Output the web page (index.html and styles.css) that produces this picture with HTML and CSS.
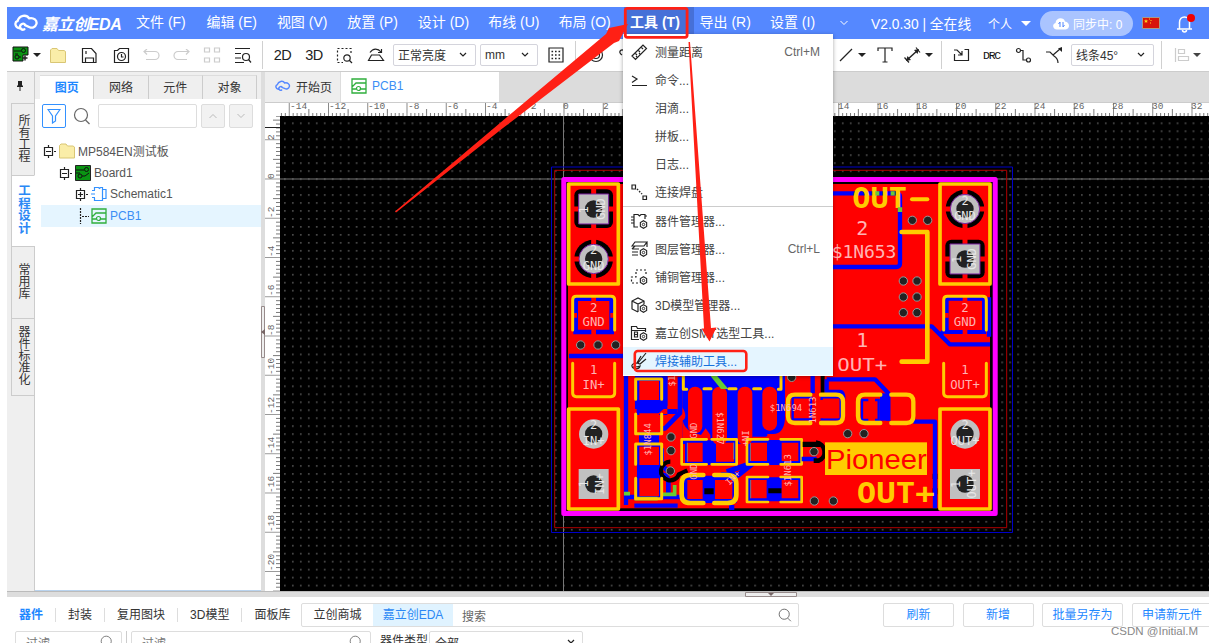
FILE: index.html
```html
<!DOCTYPE html>
<html lang="zh-CN">
<head>
<meta charset="utf-8">
<title>嘉立创EDA</title>
<link rel="stylesheet" href="styles.css">
</head>
<body>
<svg class="defs" width="0" height="0">
  <defs>
    <symbol id="cloud" viewBox="0 0 24 17"><path d="M5 13.5C1 12.500 0 8 3.500 6.500C5 1 12 0 14.500 4C19 3 22.500 6 21.500 9.500C20.500 13 17 13.500 15 12.500L10.500 10.500M10 14.500a2.800 2.800 0 1 1 1-4" fill="none" stroke="currentColor" stroke-width="2.200" stroke-linecap="round"/></symbol>
    <symbol id="search" viewBox="0 0 18 18"><circle cx="8" cy="8" r="6.500" fill="none" stroke="currentColor" stroke-width="1.200"/><path d="M12.500 13l4 4" stroke="currentColor" stroke-width="1.200"/></symbol>
    <symbol id="pcb" viewBox="0 0 16 16"><path d="M1 9V1h14v14H1V9l4-4h10M1 11h4M10 11h5" fill="none" stroke="#2fae3c" stroke-width="1.300"/><circle cx="7.500" cy="10.500" r="2" fill="none" stroke="#2fae3c" stroke-width="1.200"/></symbol>
    <symbol id="folder" viewBox="0 0 16 16"><path d="M.5 15V2.500L2 1h5l1.500 2H14l1.500 1V15z" fill="#faeda8" stroke="#d9c675"/></symbol>
    <symbol id="board" viewBox="0 0 16 16"><path d="M.5.5h15v15H.5z" fill="#0a9413" stroke="#222"/><path d="M1 5h8M7 11h3l4-3M1 8h4" stroke="#111" fill="none"/><circle cx="11.500" cy="4.500" r="2" fill="none" stroke="#111"/><circle cx="5" cy="11" r="2" fill="none" stroke="#111"/></symbol>
    <symbol id="gear" viewBox="0 0 8 8"><path d="M4 .6l2.800 1.700v3.400L4 7.400 1.200 5.700V2.300z" fill="#fff" stroke="#222"/><circle cx="4" cy="4" r="1.100" fill="none" stroke="#222" stroke-width=".8"/></symbol>
  </defs>
</svg>
<div class="app">
  <header class="topbar">
    <div class="logo"><svg width="25" height="18"><use href="#cloud"/></svg><span>嘉立创EDA</span></div>
    <nav class="menubar">
      <span>文件 (F)</span><span>编辑 (E)</span><span>视图 (V)</span><span>放置 (P)</span><span>设计 (D)</span><span>布线 (U)</span><span>布局 (O)</span><span class="open">工具 (T)</span><span>导出 (R)</span><span>设置 (I)</span>
    </nav>
    <svg class="more" width="10" height="6" viewBox="0 0 10 6"><path d="M1.500 1L5 4.500 8.500 1" fill="none" stroke="#fff"/></svg>
    <span class="version">V2.0.30 | 全在线</span>
    <span class="scope">个人 <i class="caret light"></i></span>
    <div class="sync"><svg width="18" height="13" viewBox="0 0 18 13"><path d="M5 12.500C1 12.500-.5 7.500 3.500 6 4 0 12 0 13 4.500c5 .5 5.500 7.500.500 8z" fill="#fff"/><path d="M8 5v5M8 5L6.500 7M11 5v5M11 10l1.500-2" stroke="#5588ff" fill="none"/></svg><span>同步中: 0</span></div>
    <svg class="flag" width="18" height="12" viewBox="0 0 18 12"><path d="M.5.5h17v11H.5z" fill="#d8130b" stroke="#a98"/><path d="M4 2l.6 1.500H6L5 4.500l.3 1.500L4 5 2.700 6 3 4.500l-1-1h1.400z" fill="#ffd21a"/><path d="M7 2h1M8.500 3.500h1M8 6h1" stroke="#ffd21a"/></svg>
    <svg class="bell" width="22" height="20" viewBox="0 0 22 20"><path d="M2 16h15M4.500 16V9.500C4.500 2 14.500 2 14.500 9.500V16M7.500 17c0 2.500 4 2.500 4 0" fill="none" stroke="#fff" stroke-width="1.500"/><circle cx="16" cy="5" r="4" fill="#f00000"/></svg>
  </header>

  <div class="toolbar">
    <span><svg width="30" height="18" viewBox="0 0 30 18"><path d="M1 1h15v8h-5v6H1z" fill="#0a9413" stroke="#111"/><path d="M2 5h7M3 8h3M7 11h2" stroke="#111" fill="none"/><circle cx="11.500" cy="4.500" r="2" fill="none" stroke="#111"/><circle cx="5" cy="11" r="2" fill="none" stroke="#111"/><path d="M10.500 12h5M13 9.500v5" stroke="#222" stroke-width="1.500"/><path d="M21 7h8l-4 4z" fill="#222"/></svg></span>
    <span><svg width="16" height="17"><use href="#folder"/></svg></span>
    <span><svg width="17" height="17" viewBox="0 0 17 17"><path d="M1.500 1.500h9l4.500 5V15.500H1.500zM4.500 15v-4h8v4M5 4v3" class="ln"/></svg></span>
    <span><svg width="17" height="17" viewBox="0 0 17 17"><path d="M1.500 3.500h3l2-2h9v14h-14z" class="ln"/><circle cx="8.500" cy="9.500" r="4" class="ln"/><path d="M8.500 7v3h2" class="ln"/></svg></span>
    <span><svg width="18" height="12" viewBox="0 0 18 12"><path d="M5 0L2 2.500l3 3M2 2.500h11a3.500 3.500 0 0 1 0 8H4" class="dis"/></svg></span>
    <span><svg width="18" height="12" viewBox="0 0 18 12"><path d="M13 0l3 2.500-3 3M16 2.500H5a3.500 3.500 0 0 0 0 8h9" class="dis"/></svg></span>
    <span><svg width="18" height="18" viewBox="0 0 18 18"><path d="M1.500 2h5v4h-5zM11.500 2h5v4h-5zM1.500 12h5v4h-5zM11.500 12h5v4h-5z" class="dis"/></svg></span>
    <span><svg width="18" height="17" viewBox="0 0 18 17"><path d="M1 1.500h15M1 6.500h6M1 11h6M1 15.500h9" class="ln"/><circle cx="12" cy="10" r="3.500" class="ln"/><path d="M14.500 12.500l2.500 3" class="ln"/></svg></span>
    <b></b>
    <span class="dim">2D</span>
    <span class="dim">3D</span>
    <span><svg width="17" height="17" viewBox="0 0 17 17"><path d="M15 6V1.500H1.500v14H7" class="ln" stroke-dasharray="2 2"/><circle cx="11" cy="11" r="3.200" class="ln"/><path d="M13 13l3 3" class="ln"/></svg></span>
    <span><svg width="18" height="14" viewBox="0 0 18 14"><path d="M4.500 7h8l4 5.500H1.500zM3 4.500C6 0 11 0 14 4M14.500 1v3.500H11" class="ln"/></svg></span>
    <span><em class="select w83">正常亮度<svg width="8" height="6" viewBox="0 0 8 6"><path d="M1 1l3 3 3-3" class="ln"/></svg></em></span>
    <span><em class="select w58">mm<svg width="8" height="6" viewBox="0 0 8 6"><path d="M1 1l3 3 3-3" class="ln"/></svg></em></span>
    <span><svg width="16" height="16" viewBox="0 0 16 16"><path d="M1 1h14v14H1z" class="ln"/><path d="M3.500 4.500h10M3.500 8h10M3.500 11.500h10" stroke="#222" stroke-width="1.600" stroke-dasharray="1.600 1.900"/></svg></span>
    <b></b>
    <span><svg width="16" height="16" viewBox="0 0 16 16"><circle cx="8" cy="8" r="6.500" class="ln"/><circle cx="8" cy="8" r="3.500" class="ln"/></svg></span>
    <span><svg width="16" height="16" viewBox="0 0 16 16"><path d="M3 8c-5-3 0-7 2-4l8 8" class="ln" fill="none"/></svg></span>
    <span></span>
    <span><svg width="32" height="16" viewBox="0 0 32 16"><path d="M3 14L15 2" class="ln"/><path d="M21 6h8l-4 4z" fill="#222"/></svg></span>
    <span><svg width="16" height="16" viewBox="0 0 16 16"><path d="M1 4V1h14v3M8 1v14M5.500 15h5" class="ln"/></svg></span>
    <span><svg width="30" height="16" viewBox="0 0 30 16"><path d="M3 13L14 3" stroke="#222" stroke-width="1.500"/><path d="M0.500 10.500l4.500 5M12 .5l4 5" class="ln"/><path d="M2 14l1.500-5 3.500 4zM15 2l-1.500 5L10 3z" fill="#222"/><path d="M21 6h8l-4 4z" fill="#222"/></svg></span>
    <b></b>
    <span><svg width="17" height="14" viewBox="0 0 17 14"><path d="M1.500 6v6.500h14V1.500h-4M1 2h3l5 5M9 3v4H5" class="ln"/></svg></span>
    <span class="drc">DRC</span>
    <span><svg width="17" height="16" viewBox="0 0 17 16"><circle cx="3.500" cy="3.500" r="2" class="ln"/><circle cx="13.500" cy="13" r="2" class="ln"/><path d="M5.500 3.500H8V13h3.500" class="ln"/></svg></span>
    <span><svg width="17" height="17" viewBox="0 0 17 17"><path d="M0 5h4l4 4c3 2 4 4 4 7M7 8l7-6" class="ln"/><path d="M16 0v5l-4-3.500z" fill="#222"/></svg></span>
    <span><em class="select w83">线条45°<svg width="8" height="6" viewBox="0 0 8 6"><path d="M1 1l3 3 3-3" class="ln"/></svg></em></span>
    <b></b>
    <span><svg width="28" height="16" viewBox="0 0 28 16"><path d="M1.500 1v14M4.500 2.500h6v4h-6zM4.500 9.500h10v4h-10z" class="dis"/><path d="M19 6h8l-4 4z" fill="#444"/></svg></span>
  </div>

  <div class="work">
    <aside class="rail">
      <div class="pin"><svg width="8" height="10" viewBox="0 0 8 10"><path d="M2 0h4v4.500h1V6H1V4.500h1z" fill="#222"/><path d="M4 6v4" stroke="#222"/></svg></div>
      <div class="vtab">所有工程</div>
      <div class="vtab on">工程设计</div>
      <div class="vtab">常用库</div>
      <div class="vtab tall">器件标准化</div>
    </aside>
    <section class="panel">
      <div class="ptabs"><span class="on">图页</span><span>网络</span><span>元件</span><span>对象</span></div>
      <div class="pbody">
        <div class="find">
          <span class="filter"><svg width="14" height="16" viewBox="0 0 14 16"><path d="M1 1.500h12L8.500 8v5l-3 2V8z" fill="none" stroke="#3391ff" stroke-width="1.200"/></svg></span>
          <svg class="mag" width="18" height="18"><use href="#search"/></svg>
          <span class="input"></span>
          <span class="btn"><svg width="10" height="6" viewBox="0 0 10 6"><path d="M1.500 5L5 1.500 8.500 5" fill="none" stroke="#bbb"/></svg></span>
          <span class="btn"><svg width="10" height="6" viewBox="0 0 10 6"><path d="M1.500 1L5 4.500 8.500 1" fill="none" stroke="#bbb"/></svg></span>
        </div>
        <div class="tree">
          <div class="row"><svg width="14" height="16" viewBox="0 0 14 16"><path d="M1.500 4.500h8v8h-8zM3 8.500h5M5.500 2v2M5.500 13v2M11 8.500h2" class="ln"/></svg><svg width="16" height="16"><use href="#folder"/></svg>MP584EN测试板</div>
          <div class="row l1"><svg width="14" height="16" viewBox="0 0 14 16"><path d="M1.500 4.500h8v8h-8zM3 8.500h5M5.500 2v2M5.500 13v2M11 8.500h2" class="ln"/></svg><svg width="16" height="16"><use href="#board"/></svg>Board1</div>
          <div class="row l2"><svg width="14" height="16" viewBox="0 0 14 16"><path d="M1.500 4.500h8v8h-8zM3 8.500h5M5.500 6v5M5.500 2v2M5.500 13v2M11 8.500h2" class="ln"/></svg><svg width="16" height="16" viewBox="0 0 16 16"><path d="M3.500 4V1.500h4l1 1 1-1h2V14.500H3.500V12M1 4.500h3M1 11.500h3M0 8h4M11.500 3.500h3.500v9h-3.500" fill="none" stroke="#3391ff" stroke-width="1.200"/></svg>Schematic1</div>
          <div class="row l2 sel"><svg width="14" height="16" viewBox="0 0 14 16"><path d="M5.500 0v16M7 8.500h7" class="ln" stroke-dasharray="2 1"/></svg><svg width="16" height="16"><use href="#pcb"/></svg>PCB1</div>
        </div>
      </div>
    </section>
    <div class="vsplit"><svg width="4" height="52" viewBox="0 0 4 52"><path d="M.5.5h3v51h-3z" fill="#eee" stroke="#978b8b"/><path d="M4 23v6l-4-3z" fill="#766"/></svg></div>
    <main class="editor">
      <div class="etabs"><span class="home"><svg width="16" height="12"><use href="#cloud"/></svg>开始页</span><span class="doc"><svg width="16" height="16"><use href="#pcb"/></svg>PCB1</span></div>
      <svg class="stage" width="944" height="489" viewBox="265 102 944 489">
        <defs>
          <pattern id="dots" x="284" y="122.400" width="7.970" height="7.970" patternUnits="userSpaceOnUse"><rect width="1.700" height="1.700" fill="#4a4a4a"/></pattern>
          <pattern id="tx" x="563.500" y="102" width="39.250" height="14" patternUnits="userSpaceOnUse"><path d="M.5 0v14" stroke="#888"/><path d="M20.100 7v7" stroke="#777"/><path d="M4.400 11v3M8.400 11v3M12.300 11v3M16.200 11v3M24 11v3M28 11v3M31.900 11v3M35.800 11v3" stroke="#777"/></pattern>
          <pattern id="ty" x="265" y="178.500" width="15" height="39.250" patternUnits="userSpaceOnUse"><path d="M0 .5h15" stroke="#999"/><path d="M8 20.100h7M11 4.400h4M11 8.400h4M11 12.300h4M11 16.200h4M11 24h4M11 28h4M11 31.900h4M11 35.800h4" stroke="#777"/></pattern>
          <g id="via"><circle r="12.500" fill="#222" stroke="#999" stroke-width="3"/></g>
          <g id="roundpad"><circle r="44" fill="#c0c0c0"/><circle r="26" fill="#222"/></g>
          <g id="squarepad"><path d="M-45-45h90v90h-90z" fill="#c0c0c0"/><circle r="26" fill="#222"/></g>
        </defs>
        <rect x="265" y="102" width="944" height="489" fill="#fff"/>
        <rect x="280" y="102" width="929" height="14" fill="url(#tx)"/>
        <rect x="265" y="116" width="15" height="475" fill="url(#ty)"/>
        <path d="M265 127.500h15" stroke="#222"/>
        <g class="rul">
          <text x="290" y="109">-14</text><text x="329" y="109">-12</text><text x="368" y="109">-10</text><text x="408" y="109">-8</text><text x="447" y="109">-6</text><text x="486" y="109">-4</text><text x="525" y="109">-2</text><text x="563" y="109">0</text><text x="603" y="109">2</text><text x="838" y="109">14</text><text x="877" y="109">16</text><text x="916" y="109">18</text><text x="955" y="109">20</text><text x="995" y="109">22</text><text x="1034" y="109">24</text><text x="1073" y="109">26</text><text x="1112" y="109">28</text><text x="1152" y="109">30</text><text x="1191" y="109">32</text>
          <text transform="translate(274 140) rotate(-90)">2</text><text transform="translate(274 179) rotate(-90)">0</text><text transform="translate(274 218) rotate(-90)">-2</text><text transform="translate(274 257) rotate(-90)">-4</text><text transform="translate(274 296) rotate(-90)">-6</text><text transform="translate(274 336) rotate(-90)">-8</text><text transform="translate(274 375) rotate(-90)">-10</text><text transform="translate(274 414) rotate(-90)">-12</text><text transform="translate(274 454) rotate(-90)">-14</text><text transform="translate(274 493) rotate(-90)">-16</text><text transform="translate(274 532) rotate(-90)">-18</text><text transform="translate(274 571) rotate(-90)">-20</text>
        </g>
        <rect x="280" y="116" width="929" height="475"/>
        <rect x="280" y="116" width="929" height="475" fill="url(#dots)"/>
        <path d="M280 179h929M563.500 116v475" stroke="#777"/>
        <path d="M551.500 167h461v365.500h-461z" fill="none" stroke="#0000c8"/>
        <path d="M554.700 170.300h452v357.400h-452z" fill="none" stroke="#b00000"/>
        <rect x="563.800" y="179.500" width="431.400" height="334" stroke="#f0f" stroke-width="5" stroke-linejoin="round"/>
        <rect x="568" y="184" width="422" height="324.300" fill="#f00"/>

        <!-- upper left pads -->
        <g transform="translate(545 160) scale(.33333)">
          <rect x="88" y="88" width="116" height="116" rx="18"/><path d="M146 86v120M86 147h120" stroke="#f00" stroke-width="15"/>
          <use href="#squarepad" x="146" y="147"/><path d="M101 102h90v90h-90z" fill="none" stroke="#7a20a0" stroke-width="3"/>
          <circle cx="146" cy="297" r="58"/><path d="M146 237v120M86 297h120" stroke="#f00" stroke-width="15"/>
          <use href="#roundpad" x="146" y="297"/><circle cx="146" cy="297" r="44" fill="none" stroke="#7a20a0" stroke-width="3"/>
          <path d="M71 72h149v300H71z" class="ylw" stroke-width="11"/>
          <path d="M92 416h108v100H92z" fill="none" stroke="#00f" stroke-width="14"/><path d="M146 405v18M146 508v20M196 466h16M80 466h16" stroke="#f00" stroke-width="14"/>
          <path d="M83 510v-90q0-11 11-11h104q11 0 11 11v90" class="ylw" stroke-width="9"/>
          <use href="#via" x="107" y="555"/><use href="#via" x="159" y="555"/><use href="#via" x="212" y="555"/>
          <g class="net" font-size="37"><text x="146" y="455">2</text><text x="146" y="498">GND</text></g>
          <g class="pad" font-size="36"><text x="146" y="283">2</text><text x="146" y="331">GND</text><text transform="translate(128 150) rotate(-90)">1</text><text transform="translate(180 147) rotate(-90)">GND</text></g>
        </g>

        <!-- upper right area -->
        <g transform="translate(780 160) scale(.33333)">
          <path d="M155 100h194q11 0 11 11v199q0 11-11 11H155M155 499h300l54 54h121M480 525l22-22M627 412v118" class="blu" stroke-width="13"/>
          <text x="217" y="145" class="silk" textLength="164" lengthAdjust="spacingAndGlyphs">OUT</text><path d="M396 118h46" class="ylw" stroke-width="12"/>
          <path d="M286 100h12M332 100h12M360 142v14" stroke="#6c3" stroke-width="13"/>
          <path d="M365 216h77v389h-77" class="ylw" stroke-width="14"/>
          <use href="#via" x="397" y="181"/><use href="#via" x="443" y="181"/><use href="#via" x="370" y="363"/><use href="#via" x="411" y="363"/><use href="#via" x="370" y="411"/><use href="#via" x="411" y="411"/><use href="#via" x="370" y="458"/><use href="#via" x="411" y="458"/>
          <circle cx="555" cy="147" r="58"/><path d="M555 87v120M495 147h120" stroke="#f00" stroke-width="15"/>
          <use href="#roundpad" x="555" y="147"/><circle cx="555" cy="147" r="44" fill="none" stroke="#7a20a0" stroke-width="3"/>
          <rect x="496" y="239" width="118" height="116" rx="18"/><path d="M555 237v120M494 297h122" stroke="#f00" stroke-width="15"/>
          <use href="#squarepad" x="555" y="297"/><path d="M510 252h90v90h-90z" fill="none" stroke="#7a20a0" stroke-width="3"/>
          <path d="M480 72h150v300H480z" class="ylw" stroke-width="11"/>
          <path d="M500 416h112v100H500z" fill="none" stroke="#00f" stroke-width="12"/><path d="M555 405v18M555 508v20M490 466h16" stroke="#f00" stroke-width="14"/>
          <path d="M491 510v-90q0-11 11-11h106q11 0 11 11v90" class="ylw" stroke-width="9"/>
          <g class="net" font-size="54"><text x="247" y="225" font-size="60">2</text><text x="252" y="293" textLength="194">$1N653</text><text x="247" y="562" font-size="60">1</text><text x="247" y="632" textLength="150" lengthAdjust="spacingAndGlyphs">OUT+</text></g>
          <g class="net" font-size="37"><text x="555" y="455">2</text><text x="555" y="498">GND</text></g>
          <g class="pad" font-size="36"><text x="555" y="135">2</text><text x="555" y="181">GND</text><text transform="translate(542 298) rotate(-90)">1</text><text transform="translate(588 297) rotate(-90)">GND</text></g>
        </g>

        <!-- lower left area -->
        <g transform="translate(545 345) scale(.33333)">
          <path d="M72 33h165M243 80v400M243 456h245M268 482h130" class="blu" stroke-width="13"/>
          <path d="M270 92h98v90l-30 25h60v-15h-128zM275 165h92v45h-92zM282 262h60v35h-60zM276 300h74v160h-74z" fill="#00f"/>
          <path d="M345 250h15l45-46V95M350 310v50l20 20M350 390q15-2 20 15v50" class="blu" stroke-width="14"/>
          <path d="M412 92h308v130q-4 45-35 45h-18v30h-255v-70q18-10 0-40z" fill="#00f"/>
          <path d="M420 285h155v75H420zM608 285h160v75H608zM415 392h160v82H415zM608 397h160v72H608z" fill="#00f"/>
          <path d="M545 380l60-20M520 390h60l50-40M560 480v15" class="blu" stroke-width="16"/>
          <path d="M478 430h28v18h-28zM670 430h40v15h-40z"/>
          <path d="M283 108h59v57h-59zM283 205h59v52h-59zM283 305h59v55h-59zM283 400h59v54h-59zM427 293h46v57h-46zM513 293h54v57h-54zM616 293h50v55h-50zM710 293h50v55h-50zM427 405h46v57h-46zM510 405h52v57h-52zM617 405h48v55h-48zM710 405h50v55h-50z" fill="#f00"/>
          <path d="M427 350v-57M566 293v50M616 348v-55M617 460v-55" stroke="#778" stroke-width="3"/>
          <g fill="#f00"><rect x="429" y="125" width="43" height="140" rx="21"/><rect x="502" y="125" width="44" height="175" rx="21"/><rect x="578" y="125" width="44" height="175" rx="21"/><rect x="652" y="125" width="44" height="132" rx="21"/><path d="M412 222q5 30 30 40l26 8 14-20 14 20v16h-84zM622 275h40l20-8h40v16H622zM475 365h70l-22 22h-38zM652 365h74l-18 22h-38z"/></g>
          <path d="M376 350a28 28 0 1 0 26 38l25-12" fill="none" stroke="#000" stroke-width="13"/>
          <path d="M237 446h18M353 448h36v-28M268 461h70" fill="none" stroke="#6c3" stroke-width="11"/><path d="M494 90h20l36 42h-22z" fill="#6c3"/>
          <path d="M272 163v-61h78v61M272 207v59h78v-59M272 358v-61h78v61M272 400v61h78v-61M415 92v41h10M708 92v41h-8M477 131h21M552 131h21M626 131h21" class="ylw" stroke-width="9"/>
          <path d="M485 283h-75v75h75M500 283h75v75h-75M669 283h-63v75h63M707 283h63v75h-63M669 396h-63v75h63M707 396h63v75h-63" class="ylw" stroke-width="8"/>
          <path d="M475 390h-39q-26 0-26 26v34q0 24 26 24h39M508 390h39q27 0 27 26v34q0 24-27 24h-39" class="ylw" stroke-width="14"/>
          <use href="#via" x="378" y="276"/><use href="#via" x="378" y="317"/><use href="#via" x="376" y="378"/>
          <path d="M83 55v90q0 10 11 10h104q11 0 11-10V55" class="ylw" stroke-width="9"/>
          <path d="M71 192h149v300H71z" class="ylw" stroke-width="11"/>
          <use href="#roundpad" x="146" y="267"/><use href="#squarepad" x="146" y="417"/>
          <g class="net" font-size="37"><text x="146" y="88">1</text><text x="146" y="131">IN+</text></g>
          <g class="pad" font-size="36"><text x="146" y="253">2</text><text x="146" y="299">IN+</text><text transform="translate(130 417) rotate(-90)">1</text><text transform="translate(178 417) rotate(-90)">IN+</text></g>
          <g class="net" font-size="27"><text transform="translate(318 283) rotate(-90)">$1N844</text><text transform="translate(391 92) rotate(-90)">$1N8</text><text transform="translate(456 257) rotate(-90)">GND</text><text transform="translate(456 380) rotate(-90)">GND</text><text transform="translate(516 250) rotate(90)">$1N627</text><text transform="translate(592 280) rotate(90)">IN+</text><text transform="translate(570 405) rotate(-45)">IN+</text></g>
        </g>

        <!-- lower right area -->
        <g transform="translate(780 345) scale(.33333)">
          <path d="M122 90h12v55h-12zM68 290h52v16H68zM458 386h14v16h-14zM458 430h14v18h-14z"/>
          <path d="M98 92v53M140 103h145l40 42v82M140 103v38h40q10 0 10 20M400 230h65v260M5 140v95M65 342h45" class="blu" stroke-width="13"/>
          <path d="M314 145v82" class="blu" stroke-width="28"/>
          <path d="M38 157h55v66H38zM125 157h57v66h-57zM246 165h50v60h-50z" fill="none" stroke="#00f" stroke-width="7"/>
          <path d="M265 150h20v80h-20zM106 150h12v80h-12zM118 165h56v55h-56z" fill="#f00"/>
          <path d="M92 293a28 28 0 0 1 8 54H85" transform="translate(16 0)" fill="none" stroke="#000" stroke-width="14"/>
          <path d="M91 149H45q-21 0-21 21v43q0 21 21 21h46M123 149h45q21 0 21 21v43q0 21-21 21h-45M301 149h-46q-21 0-21 21v43q0 21 21 21h46M334 149h45q21 0 21 21v43q0 21-21 21h-45" class="ylw" stroke-width="13"/>
          <use href="#via" x="35" y="97"/><use href="#via" x="203" y="266"/><use href="#via" x="252" y="266"/><use href="#via" x="102" y="320"/><use href="#via" x="103" y="468"/><use href="#via" x="160" y="468"/>
          <rect x="135" y="292" width="306" height="98" fill="#fc0"/><text x="138" y="371" class="brand" textLength="302" lengthAdjust="spacingAndGlyphs">Pioneer</text>
          <text x="230" y="474" class="silk" textLength="234" lengthAdjust="spacingAndGlyphs">OUT+</text>
          <path d="M491 55v90q0 10 11 10h106q11 0 11-10V55" class="ylw" stroke-width="9"/>
          <path d="M480 192h150v300H480z" class="ylw" stroke-width="11"/>
          <use href="#roundpad" x="555" y="267"/><use href="#squarepad" x="555" y="417"/>
          <g class="net" font-size="37"><text x="555" y="88">1</text><text x="555" y="131">OUT+</text></g>
          <g class="pad" font-size="36"><text x="555" y="253">2</text><text x="555" y="299">OUT+</text><text transform="translate(541 418) rotate(-90)">1</text><text transform="translate(587 417) rotate(-90)">OUT+</text></g>
          <g class="net" font-size="27"><text x="18" y="199">$1N694</text><text transform="translate(33 376) rotate(-90)">$1N613</text><text transform="translate(108 195) rotate(-90)">1N613</text></g>
        </g>
        <path d="M265 102.500h944" stroke="#ccc"/>
      </svg>
    </main>
  </div>
  <div class="hsplit"><svg width="52" height="5" viewBox="0 0 52 5"><path d="M.5.5h51v4H.5z" fill="#eee" stroke="#978b8b"/><path d="M23 1h6l-3 3z" fill="#766"/></svg></div>

  <footer class="library">
    <div class="bar">
      <div class="kinds"><span class="on">器件</span><span>封装</span><span>复用图块</span><span>3D模型</span><span>面板库</span></div>
      <div class="query"><span class="src">立创商城</span><span class="src on">嘉立创EDA</span><span class="ph">搜索</span><svg width="14" height="14"><use href="#search"/></svg></div>
      <div class="acts"><span>刷新</span><span>新增</span><span class="wide">批量另存为</span><span class="wide">申请新元件</span></div>
    </div>
    <div class="filters">
      <span class="fi a">过滤<svg width="14" height="14"><use href="#search"/></svg></span><i></i><span class="fi b">过滤<svg width="14" height="14"><use href="#search"/></svg></span><span class="lab">器件类型</span><span class="fi c">全部<svg width="8" height="6" viewBox="0 0 8 6"><path d="M1 1l3 3 3-3" class="ln"/></svg></span>
    </div>
  </footer>
</div>

<div class="dropdown">
  <div class="mi"><svg viewBox="0 0 18 18"><path d="M2 13L13 2l3.500 3.500-11 11zM5 10l2 2M8 7l2 2M11 4l2 2M6 13l1 1M9 10l1 1" class="ln"/></svg><span>测量距离</span><kbd>Ctrl+M</kbd></div>
  <div class="mi"><svg viewBox="0 0 18 18"><path d="M2 5l5 3-5 3.500M2 14.500h15" class="ln"/></svg><span>命令...</span></div>
  <div class="mi"><svg></svg><span>泪滴...</span></div>
  <div class="mi"><svg></svg><span>拼板...</span></div>
  <div class="mi"><svg></svg><span>日志...</span></div>
  <div class="mi"><svg viewBox="0 0 18 18"><path d="M2 2h3.500v4H2zM13 13h3.500v3.500H13z" class="ln"/><path d="M7 6l5 5" stroke="#222" stroke-width="1.500" stroke-dasharray="1.500 1.500"/></svg><span>连接焊盘</span></div>
  <hr>
  <div class="mi"><svg viewBox="0 0 18 18"><path d="M8 15H4V2.500h4l1.500 1.500L11 2.500h4V7M1 5h3M1 8h3M1 11h3M15 4h2" class="ln"/><use href="#gear" x="9" y="8" width="9" height="9"/></svg><span>器件管理器...</span></div>
  <div class="mi"><svg viewBox="0 0 18 18"><path d="M2 6l3-4h12l-3 4zM2 9l3-3M2 9h7M2 12h6M2 15h6M17 2v5" class="ln"/><use href="#gear" x="9" y="8" width="9" height="9"/></svg><span>图层管理器...</span><kbd>Ctrl+L</kbd></div>
  <div class="mi"><svg viewBox="0 0 18 18"><path d="M8 15H1.500V9H6V2h10v5" class="ln" stroke-dasharray="2 2"/><use href="#gear" x="9" y="8" width="9" height="9"/></svg><span>铺铜管理器...</span></div>
  <div class="mi"><svg viewBox="0 0 18 18"><path d="M8 16l-6-3V5l6-3 6 3v3M2 5l6 3 6-3M8 8v8" class="ln"/><use href="#gear" x="9" y="8" width="9" height="9"/></svg><span>3D模型管理器...</span></div>
  <div class="mi"><svg viewBox="0 0 18 18"><path d="M9 15.500H1.500v-13h5l1 2h8V8M1.500 6.500h14M4.500 8v5h3V8zM4.500 10.500h3" class="ln"/><use href="#gear" x="9" y="8" width="9" height="9"/></svg><span>嘉立创SMT选型工具...</span></div>
  <div class="mi hot"><svg viewBox="0 0 18 18"><path d="M16 1L8 11M11 4l-4 7 3 1 6-5M8 11c-7 0-7 4-5 4s5 0 7-1c-1 4-7 3-8 1" class="ln"/></svg><span>焊接辅助工具...</span></div>
</div>

<svg class="notes" width="1225" height="643" viewBox="0 0 1225 643">
  <rect x="625.300" y="8.300" width="61.800" height="29" rx="2" fill="none" stroke="#ff2015" stroke-width="2.800"/>
  <path d="M395 211.500L500 123 606 34l3-6 19-4-9 17-5 2L503 128 396 212.500z" fill="#ff2015"/>
  <path d="M688.500 42h1.500l21 286 5.500-.5-7 14-8-13h2.500z" fill="#ff2015"/>
  <rect x="634.800" y="351" width="111.500" height="20" rx="3" fill="none" stroke="#ff2015" stroke-width="2.600"/>
</svg>
<div class="credit">CSDN @Initial.M</div>
</body>
</html>
```

FILE: styles.css
```css
* { box-sizing: border-box; }
body { margin: 0; padding: 7px 16px 0 7px; height: 643px; overflow: hidden; background: #fff; position: relative;
  font: 12px "Liberation Sans", "Noto Sans CJK SC", sans-serif; color: #333; }
svg { display: block; flex: none; }
.defs { position: absolute; }
.ln { fill: none; stroke: #222; stroke-width: 1.2; }
.dis { fill: none; stroke: #ccc; stroke-width: 1.2; }
.app { width: 1202px; height: 636px; overflow: hidden; display: flex; flex-direction: column; white-space: nowrap; }

.topbar { height: 32px; flex: none; background: #5588ff; color: #fff; display: flex; align-items: center; }
.logo { width: 129px; padding-left: 7px; display: flex; align-items: center; gap: 3px; flex: none; }
.logo span { font-size: 16px; font-weight: bold; font-style: italic; letter-spacing: -.4px; }
.menubar { display: grid; grid-template-columns: repeat(10, 70.45px); width: 701px; flex: none; font-size: 14px; height: 32px; line-height: 30px; }
.menubar .open { background: #4670d8; font-weight: bold; margin: 0 6px 1px -5px; padding-left: 6px; height: 31px; }
.more { margin-left: 2px; }
.version { margin-left: 22px; width: 117px; font-size: 13.8px; }
.scope { width: 52px; display: flex; align-items: center; justify-content: space-between; padding-right: 9px; }
.caret { border: 5px solid transparent; border-top-color: #fff; border-bottom: 0; }
.sync { width: 93px; height: 25px; border-radius: 13px; background: #aac4ff; display: flex; align-items: center; gap: 3px; padding-left: 12px; }
.flag { margin-left: 9px; }
.bell { margin-left: 15px; }

.toolbar { height: 33px; flex: none; border-bottom: 1px solid #ccc; padding-left: 4px; display: grid; align-items: center; justify-items: center;
  grid-template-columns: 32px 30px 33px 30px 30px 31px 30px 32px 7px 33px 30px 31px 31px 87px 62px 32px 7px 33px 30px 194px 33px 31px 38px 7px 32px 29px 34px 29px 87px 11px 42px; }
.toolbar b { width: 1px; height: 28px; background: #d0d0d0; }
.dim { font-size: 14.5px; letter-spacing: -.5px; color: #222; }
.drc { font: 11.5px "Liberation Mono", monospace; letter-spacing: -1.2px; color: #111; }
.select { font-style: normal; height: 22px; border: 1px solid #d4d4dc; border-radius: 2px; display: flex; align-items: center; justify-content: space-between; padding: 0 8px 1px 4px; }
.w83 { width: 83px; }
.w58 { width: 58px; }

.work { height: 519px; flex: none; display: flex; }
.rail { width: 28px; background: #efefef; border-right: 1px solid #ccc; }
.pin { height: 31px; padding: 9px 0 0 9px; }
.vtab { margin-left: 4px; width: 24px; height: 71.5px; border: 1px solid #ccc; border-bottom: 0; display: flex; align-items: center; justify-content: center; writing-mode: vertical-rl; text-orientation: upright; font-size: 12px; line-height: 22px; padding-bottom: 3px; }
.vtab.on { background: #fff; border-right-color: #fff; color: #2b88f5; font-weight: bold; font-size: 12.5px; }
.vtab.tall { height: 78px; border-bottom: 1px solid #ccc; }
.panel { width: 226px; background: #efefef; display: flex; flex-direction: column; }
.ptabs { height: 27px; padding: 3px 0 0 5px; display: flex; }
.ptabs span { width: 54.3px; text-align: center; line-height: 25px; border-right: 1px solid #ccc; border-top: 1px solid #ddd; }
.ptabs .on { background: #fff; color: #1e88ff; font-weight: bold; }
.pbody { flex: 1; background: #fff; border-bottom: 1px solid #b9d3ee; }
.find { display: flex; align-items: center; padding: 5px 0 0 7px; }
.filter { width: 24px; height: 24px; border: 1px solid #3391ff; border-radius: 2px; display: grid; place-items: center; }
.mag { margin: 0 7px; color: #666; }
.input { width: 99px; height: 24px; border: 1px solid #ddd; border-radius: 2px; }
.btn { width: 24px; height: 24px; background: #f2f2f2; border: 1px solid #ddd; border-radius: 2px; display: grid; place-items: center; margin-left: 4px; }
.tree { padding: 12px 0 0 6px; color: #555; }
.row { height: 21.8px; display: flex; align-items: center; padding-left: 2px; gap: 3px; }
.row svg + svg { margin-left: -1px; }
.l1 { padding-left: 18px; }
.l2 { padding-left: 34px; }
.sel { background: #e5f5ff; color: #3b8ef5; }
.vsplit { width: 4px; background: #ddd; padding-top: 234px; }
.editor { width: 944px; }
.etabs { height: 30px; background: #dcdcdc; display: flex; }
.etabs span { display: flex; align-items: center; padding-bottom: 2px; }
.etabs .home { width: 76px; background: #eee; padding-left: 10px; gap: 5px; border-right: 1px solid #ddd; }
.home svg { color: #5588ff; }
.etabs .doc { width: 158px; background: #fff; color: #3b8ef5; padding-left: 10px; gap: 5px; }
.rul { font: 9.5px "Liberation Mono", monospace; fill: #666; }
.blu { fill: none; stroke: #00f; stroke-linejoin: round; }
.ylw { fill: none; stroke: #fc0; stroke-linejoin: round; stroke-linecap: round; }
.silk { font: bold 83px "DejaVu Sans Mono", monospace; fill: #fc0; }
.brand { font: 84px "Liberation Sans", sans-serif; fill: #f00; }
.net { font-family: "DejaVu Sans Mono", monospace; fill: #ffb3b3; text-anchor: middle; }
.pad { font-family: "DejaVu Sans Mono", monospace; fill: #e8e8e8; text-anchor: middle; }

.hsplit { height: 6px; flex: none; background: #ddd; border-top: 1px solid #bbb; padding-left: 738px; }
.library { height: 46px; background: #fff; }
.bar { display: flex; height: 24px; margin-top: 6px; align-items: center; }
.kinds { width: 294px; flex: none; display: flex; }
.kinds span { padding: 0 12px; line-height: 14px; border-right: 1px solid #ddd; }
.kinds span:last-child { border: 0; }
.kinds .on { color: #1e88ff; font-weight: bold; }
.query { width: 498px; flex: none; height: 24px; border: 1px solid #ddd; border-radius: 2px; display: flex; align-items: center; color: #666; padding-right: 6px; }
.src { width: 71px; line-height: 22px; text-align: center; color: #333; }
.src.on { width: 80px; background: #e0f3ff; color: #2b88f5; }
.ph { flex: 1; padding-left: 9px; }
.acts { margin-left: 84px; display: flex; gap: 8.5px; flex: none; }
.acts span { width: 71px; flex: none; line-height: 22px; text-align: center; border: 1px solid #ddd; border-radius: 2px; color: #1e88ff; }
.acts .wide { width: 81px; }
.filters { display: flex; margin-top: 4px; padding-left: 8px; }
.fi { height: 24px; border: 1px solid #ddd; border-radius: 2px; display: flex; align-items: center; justify-content: space-between; padding: 0 7px 2px 10px; color: #777; }
.a { width: 107px; }
.filters i { width: 1px; background: #ccc; margin: 0 4px; }
.b { width: 240px; }
.lab { padding: 0 2px 0 9px; line-height: 21px; width: 58px; }
.c { width: 154px; padding-left: 5px; color: #333; }

.dropdown { position: absolute; left: 623px; top: 34px; width: 210px; height: 342px; padding-top: 4px; background: #fff; box-shadow: 0 1px 4px rgba(0,0,0,.35); color: #444; white-space: nowrap; }
.mi { height: 28px; padding: 0 13px 0 7px; display: flex; align-items: center; }
.mi svg { width: 18px; height: 18px; margin-right: 7px; }
.mi span { flex: 1; padding-bottom: 2px; }
.mi kbd { font: inherit; color: #666; }
.dropdown hr { margin: 0; border: 0; border-top: 1px solid #ccc; }
.hot { background: #e5f5ff; color: #1670dc; }
.notes { position: absolute; left: 0; top: 0; }
.credit { position: absolute; left: 1111px; top: 625px; font-size: 11.5px; color: #888; white-space: nowrap; }
```
